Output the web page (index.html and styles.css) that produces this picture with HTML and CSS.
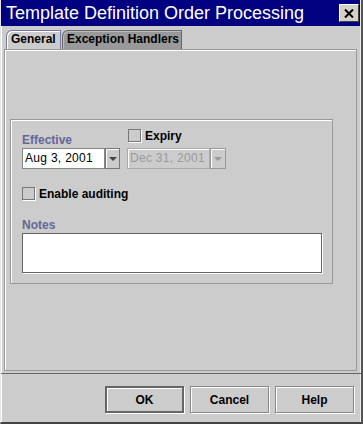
FILE: index.html
```html
<!DOCTYPE html>
<html lang="en">
<head>
  <meta charset="UTF-8" />
  <title>Template Definition Order Processing</title>
  <link rel="stylesheet" href="styles.css">
</head>
<body>

<div class="window">
  <div class="titlebar">
    <span class="title">Template Definition Order Processing</span>
    <span class="close">
      <svg width="10" height="9" viewBox="0 0 10 9"><path d="M1 0.5 L9 8.5 M9 0.5 L1 8.5" stroke="#000" stroke-width="2"/></svg>
    </span>
  </div>

  <div class="tabs">
    <div class="tab tab-general selected">General</div>
    <div class="tab tab-handlers">Exception Handlers</div>
  </div>

  <div class="panel">
    <div class="group">
      <div class="dates">
        <div class="field">
          <div class="caption">Effective</div>
          <div class="combo">
            <div class="combo-text">Aug 3, 2001</div>
            <div class="combo-arrow"><span class="tri"></span></div>
          </div>
        </div>
        <div class="field">
          <label class="check expiry"><span class="box"></span>Expiry</label>
          <div class="combo disabled">
            <div class="combo-text">Dec 31, 2001</div>
            <div class="combo-arrow"><span class="tri"></span></div>
          </div>
        </div>
      </div>

      <label class="check audit"><span class="box"></span>Enable auditing</label>

      <div class="caption notes-label">Notes</div>
      <div class="notes"></div>
    </div>
  </div>

  <div class="buttons">
    <button type="button" class="default">OK</button>
    <button type="button">Cancel</button>
    <button type="button">Help</button>
  </div>
</div>

</body>
</html>
```

FILE: styles.css
```css
body { margin: 0; background: #cccccc; font-family: "Liberation Sans", Arial, sans-serif; }

.window {
  width: 363px;
  height: 424px;
  box-sizing: border-box;
  display: flex;
  flex-direction: column;
  background: #cccccc;
  border-left: 1px solid #e4e4e4;
  border-right: 2px solid #555;
  border-bottom: 2px solid #444;
  box-shadow: inset 1px 0 0 #fff, inset -1px 0 0 #eee;
}

.titlebar {
  height: 26px;
  flex: none;
  background: #000080;
  display: flex;
  align-items: center;
  justify-content: space-between;
  margin-right: 1px;
}
.title {
  color: #fff;
  font-size: 18px;
  line-height: 26px;
  padding-left: 5px;
  white-space: nowrap;
}
.close {
  width: 20px;
  height: 18px;
  box-sizing: border-box;
  margin-right: 1px;
  background: #d4d0c8;
  border-top: 1px solid #fff;
  border-left: 1px solid #fff;
  border-right: 1px solid #404040;
  border-bottom: 1px solid #404040;
  display: flex;
  align-items: center;
  justify-content: center;
}

.tabs {
  display: flex;
  gap: 1px;
  margin-top: 4px;
  padding-left: 5px;
  height: 19px;
  flex: none;
}
.tab {
  box-sizing: border-box;
  height: 19px;
  font-size: 12px;
  font-weight: bold;
  line-height: 17px;
  padding-left: 4px;
  border: 1px solid #666;
  border-bottom: none;
  border-top-left-radius: 6px;
  background: #999999;
  box-shadow: inset 1px 1px 0 #bbb;
  white-space: nowrap;
}
.tab-general { width: 55px; }
.tab-handlers { width: 120px; }
.tab.selected {
  background: #cccccc;
  border-color: #7878a8;
  box-shadow: inset 1px 1px 0 #fff;
}

.panel {
  height: 322px;
  flex: none;
  box-sizing: border-box;
  margin: 0 4px 0 3px;
  border: 1px solid #999;
  box-shadow: inset 1px 1px 0 #fff;
  padding: 69px 0 0 5px;
}

.group {
  width: 323px;
  box-sizing: border-box;
  border: 1px solid #999;
  box-shadow: inset 1px 1px 0 #fff;
  padding: 8px 10px 10px 11px;
}

.dates {
  display: flex;
  align-items: flex-end;
  gap: 7px;
}
.caption {
  color: #666699;
  font-size: 12px;
  font-weight: bold;
  line-height: 14px;
  margin-bottom: 1px;
}

.combo {
  display: flex;
  height: 21px;
}
.combo-text {
  width: 83px;
  box-sizing: border-box;
  background: #fff;
  border: 1px solid #888;
  font-size: 12px;
  letter-spacing: 0.3px;
  line-height: 19px;
  padding-left: 2px;
  color: #000;
  white-space: nowrap;
  overflow: hidden;
}
.combo-arrow {
  width: 15px;
  box-sizing: border-box;
  border: 1px solid #777;
  background: #cccccc;
  box-shadow: inset 1px 1px 0 #fff;
  display: flex;
  align-items: center;
  justify-content: center;
}
.tri {
  width: 0;
  height: 0;
  border-left: 4px solid transparent;
  border-right: 4px solid transparent;
  border-top: 4px solid #444;
}
.combo.disabled .combo-text {
  background: #cccccc;
  color: #999;
  border-color: #aaa;
  box-shadow: inset 1px 1px 0 #fff;
}
.combo.disabled .combo-arrow { width: 16px; border-color: #999; }
.combo.disabled .tri { border-top-color: #999; }

.check {
  display: flex;
  align-items: center;
  height: 15px;
  font-size: 12px;
  font-weight: bold;
  color: #000;
}
.box {
  width: 13px;
  height: 13px;
  box-sizing: border-box;
  border: 1px solid #777;
  box-shadow: 1px 1px 0 #fff;
  background: #cccccc;
  margin-right: 4px;
}
.expiry { margin-left: 1px; margin-bottom: 5px; }
.audit { margin-top: 17px; }

.notes-label { margin-top: 17px; }
.notes {
  width: 300px;
  height: 40px;
  box-sizing: border-box;
  background: #fff;
  border: 1px solid #666;
  box-shadow: 1px 1px 0 #fff;
}

.buttons {
  flex: 1;
  margin-top: 2px;
  border-top: 1px solid #666;
  display: flex;
  justify-content: flex-end;
  align-items: flex-start;
  gap: 6px;
  padding: 12px 7px 0 0;
}
button {
  width: 79px;
  height: 27px;
  margin: 0;
  padding: 0;
  font-family: "Liberation Sans", Arial, sans-serif;
  font-size: 12px;
  font-weight: bold;
  color: #000;
  background: #cccccc;
  border: 1px solid #888;
  box-shadow: inset 1px 1px 0 #fff, 1px 1px 0 #fff;
}
button.default {
  border: 2px solid #666;
}
```
